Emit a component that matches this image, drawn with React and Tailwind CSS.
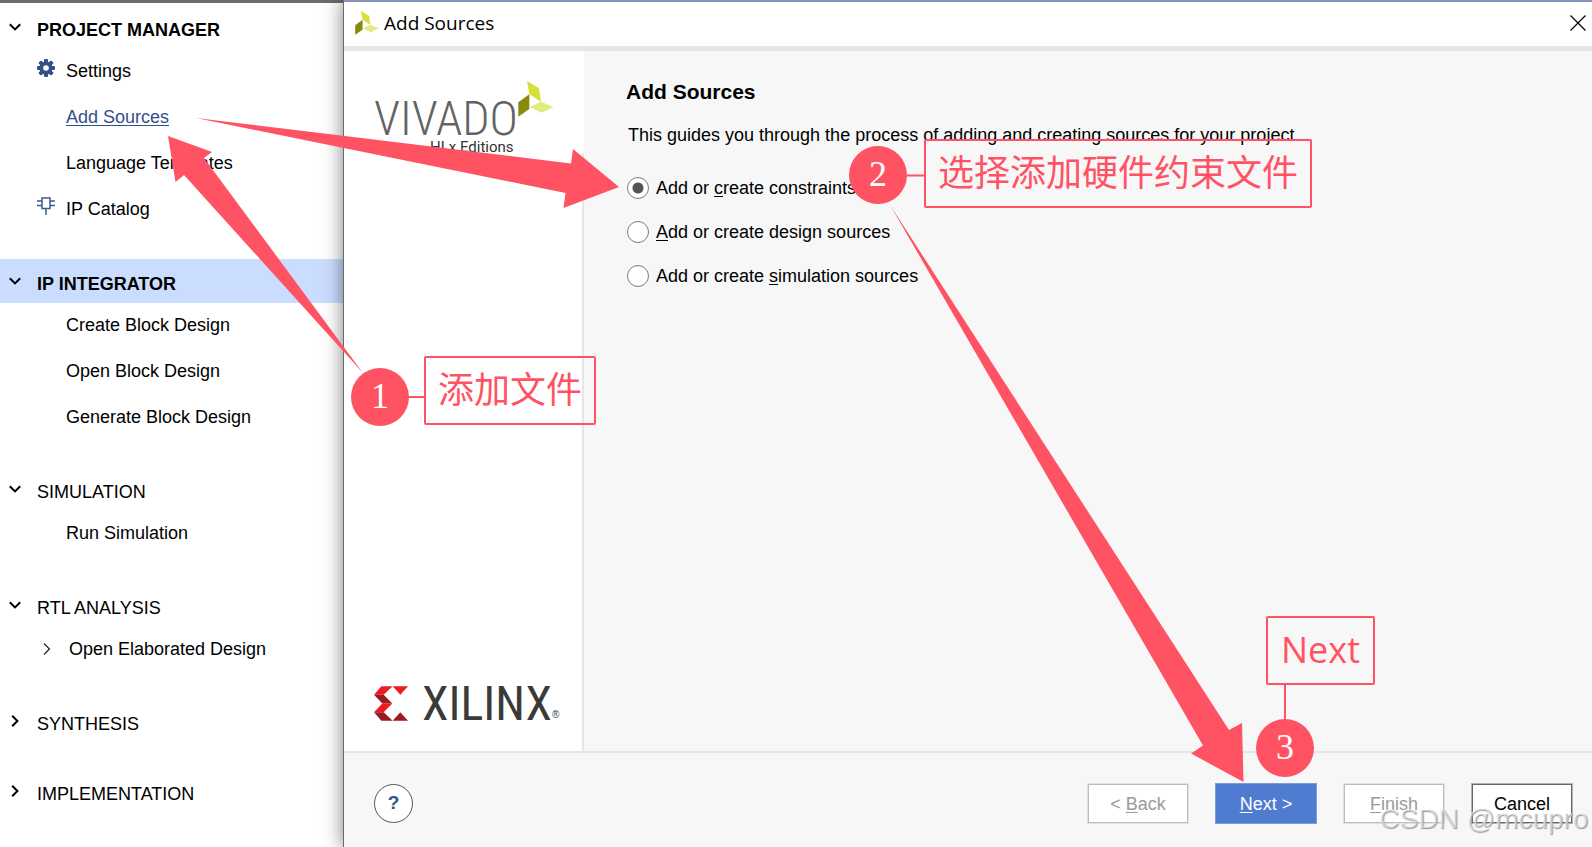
import React, { useState } from "react";
import clsx from "clsx";

const sections = [
  {
    title: "PROJECT MANAGER",
    open: true,
    bold: true,
    items: [
      { label: "Settings", icon: "gear" },
      { label: "Add Sources", active: true },
      { label: "Language Templates" },
      { label: "IP Catalog", icon: "chip" },
    ],
  },
  {
    title: "IP INTEGRATOR",
    open: true,
    bold: true,
    selected: true,
    items: [
      { label: "Create Block Design" },
      { label: "Open Block Design" },
      { label: "Generate Block Design" },
    ],
  },
  { title: "SIMULATION", open: true, items: [{ label: "Run Simulation" }] },
  {
    title: "RTL ANALYSIS",
    open: true,
    items: [{ label: "Open Elaborated Design", icon: "expand" }],
  },
  { title: "SYNTHESIS", open: false, items: [] },
  { title: "IMPLEMENTATION", open: false, items: [] },
];

// before / key / after, where key is the underlined shortcut letter
const options = [
  { id: "constraints", text: ["Add or ", "c", "reate constraints"] },
  { id: "design", text: ["", "A", "dd or create design sources"] },
  { id: "simulation", text: ["Add or create ", "s", "imulation sources"] },
];

function Mnemonic({ text }) {
  return (
    <span>
      {text[0]}
      <span className="underline underline-offset-2">{text[1]}</span>
      {text[2]}
    </span>
  );
}

function Chevron({ open }) {
  return (
    <svg width="12" height="12" viewBox="0 0 12 12" fill="none" stroke="#000" strokeWidth="2">
      {open ? <path d="M0.8 3.2 L6 8.4 L11.2 3.2" /> : <path d="M3.2 0.8 L8.4 6 L3.2 11.2" />}
    </svg>
  );
}

function ItemIcon({ name }) {
  if (name === "gear") {
    return (
      <svg className="mb-1.5" width="18" height="18" viewBox="0 0 18 18">
        <g fill="#33508a">
          <rect x="7" y="0" width="4" height="18" rx="1" />
          <rect x="0" y="7" width="18" height="4" rx="1" />
          <rect x="7" y="0" width="4" height="18" rx="1" transform="rotate(45 9 9)" />
          <rect x="7" y="0" width="4" height="18" rx="1" transform="rotate(-45 9 9)" />
          <circle cx="9" cy="9" r="6.6" />
        </g>
        <circle cx="9" cy="9" r="2.8" fill="#fff" />
      </svg>
    );
  }
  if (name === "chip") {
    return (
      <svg className="mb-1.5" width="18" height="18" viewBox="0 0 18 18" fill="none" stroke="#3c5a92" strokeWidth="1.5">
        <rect x="5" y="1" width="8" height="10.5" />
        <path d="M0 4H5M0 8.5H5M13 4H18M13 8.5H18M9 11.5V18" />
      </svg>
    );
  }
  if (name === "expand") {
    return (
      <svg className="ml-1.5" width="8" height="12" viewBox="0 0 8 12" fill="none" stroke="#222" strokeWidth="1.2">
        <path d="M1 0.5 L6.5 6 L1 11.5" />
      </svg>
    );
  }
  return null;
}

function Sidebar() {
  return (
    <nav className="w-[343px] shrink-0 border-t-3 border-[#6b6b6b] bg-white pt-0.5">
      <ul className="flex flex-col gap-[26px]">
        {sections.map((section) => (
          <li key={section.title}>
            <button
              type="button"
              className={clsx("flex h-11 w-full items-center pl-[9px]", section.selected && "bg-[#cbddff]")}
            >
              <span className="w-7 text-left">
                <Chevron open={section.open} />
              </span>
              <span className={clsx("pt-1.5", section.bold && "font-bold")}>{section.title}</span>
            </button>
            <ul>
              {section.items.map((item) => (
                <li key={item.label} className="flex h-[46px] items-center pb-0.5 pl-[37px]">
                  <span className={clsx("shrink-0", item.icon === "expand" ? "w-8" : "w-[29px]")}>
                    <ItemIcon name={item.icon} />
                  </span>
                  <a
                    href="#"
                    className={clsx(item.active && "text-[#33508a] underline underline-offset-2")}
                  >
                    {item.label}
                  </a>
                </li>
              ))}
            </ul>
          </li>
        ))}
      </ul>
    </nav>
  );
}

function VivadoMark({ className }) {
  return (
    <svg className={className} viewBox="518 81 36 36">
      <polygon points="527,81 539,88.3 541,101.7 529.3,94.3" fill="#d6e03a" />
      <polygon points="529.3,94.3 529.3,109 518.3,116.7 518.3,102.3" fill="#878a0c" />
      <polygon points="529.5,107 541,101.7 553.7,107 541.7,112.7" fill="#e3ea80" />
    </svg>
  );
}

function XilinxMark() {
  return (
    <svg className="shrink-0" width="34" height="35" viewBox="102 79 102 104">
      <g fill="#ed1c24">
        <polygon points="124,79 158,79 131,105 102,105" />
        <polygon points="127,131 157,131 131,157 102,157" />
        <polygon points="158,79 204,79 181,105" />
      </g>
      <g fill="#9b1b22">
        <polygon points="102,105 131,105 157,131 127,131" />
        <polygon points="102,157 131,157 158,183 124,183" />
        <polygon points="181,157 204,183 158,183" />
      </g>
    </svg>
  );
}

function BrandPanel() {
  return (
    <aside className="flex w-60 shrink-0 flex-col">
      <div className="h-[102px] bg-white pt-[30px] pl-[30px] text-[#636363]">
        <div className="flex h-9">
          <span className="w-36 pt-3.5 font-['Roboto_Condensed'] text-[48px] leading-[48px] font-light">VIVADO</span>
          <VivadoMark className="size-9" />
        </div>
        <p className="mt-[22px] pl-14 font-['Roboto'] text-[15px] leading-4 text-[#333]">HLx Editions</p>
      </div>
      <div className="flex flex-1 items-end border-r-2 border-[#e6e6e6] bg-white pb-[30px] pl-[30px]">
        <XilinxMark />
        <span className="ml-3.5 font-['Roboto_Condensed'] text-[48px] leading-[35px] text-[#3a3a38]">XILINX</span>
        <span className="text-[10px] leading-3 text-[#3a3a38]">®</span>
      </div>
    </aside>
  );
}

function FooterButton({ className, children }) {
  return (
    <button type="button" className={clsx("h-[39px] w-[100px] border pt-0.5 ring-1", className)}>
      {children}
    </button>
  );
}

function Dialog() {
  const [source, setSource] = useState("constraints");

  return (
    <section className="relative flex min-w-0 flex-1 flex-col border-l border-[#6b6b6b] bg-[#f7f7f7] shadow-[0_0_18px_rgba(0,0,0,0.5)]">
      <header className="flex h-[51px] items-center border-t-2 border-b-5 border-t-[#8394b8] border-b-[#e6e6e6] bg-white pr-1.5 pb-0.5 pl-[11px]">
        <VivadoMark className="size-6" />
        <h1 className="ml-[5px] flex-1 font-['Open_Sans'] text-[19px]">Add Sources</h1>
        <button type="button" aria-label="Close">
          <svg width="16" height="16" viewBox="0 0 16 16" stroke="#000" strokeWidth="1.2">
            <path d="M0.5 0.5 L15.5 15.5 M15.5 0.5 L0.5 15.5" />
          </svg>
        </button>
      </header>

      <div className="flex flex-1">
        <BrandPanel />
        <main className="min-w-0 flex-1 pt-[29px] pl-[42px]">
          <h2 className="text-[21px] leading-6 font-bold">Add Sources</h2>
          <p className="mt-[19px] pl-0.5 leading-6">
            This guides you through the process of adding and creating sources for your project
          </p>
          <fieldset className="mt-[19px]">
            {options.map((option) => (
              <label key={option.id} className="flex h-11 items-center gap-[7px]">
                <input
                  type="radio"
                  name="source"
                  checked={source === option.id}
                  onChange={() => setSource(option.id)}
                  className="mb-px ml-px size-[22px] appearance-none rounded-full border border-[#7d7d7d] bg-white checked:bg-[radial-gradient(circle,#555_5px,#fff_6px)]"
                />
                <Mnemonic text={option.text} />
              </label>
            ))}
          </fieldset>
        </main>
      </div>

      <footer className="flex h-24 items-center border-t-2 border-[#e6e6e6] pt-1.5 pr-5 pl-[30px]">
        <button
          type="button"
          className="size-[39px] rounded-full border border-[#555] bg-white text-[19px] font-bold text-[#33508a]"
        >
          ?
        </button>
        <div className="ml-auto flex gap-7">
          <FooterButton className="border-[#bcbcbc] bg-white text-[#9a9a9a] ring-[#e2e2e2]">
            <Mnemonic text={["< ", "B", "ack"]} />
          </FooterButton>
          <FooterButton className="border-[#4f7bd0] bg-[#4f7bd0] text-white ring-[#7c9cdb]">
            <Mnemonic text={["", "N", "ext >"]} />
          </FooterButton>
          <FooterButton className="border-[#bcbcbc] bg-white text-[#9a9a9a] ring-[#e2e2e2]">
            <Mnemonic text={["", "F", "inish"]} />
          </FooterButton>
          <FooterButton className="border-[#666] bg-white text-black ring-[#b5b5b5]">Cancel</FooterButton>
        </div>
      </footer>
    </section>
  );
}

function Step({ className, children }) {
  return (
    <span
      className={clsx(
        "absolute flex size-[58px] items-center justify-center rounded-full bg-[#ff5364] pb-0.5 font-['Liberation_Serif'] text-[36px] text-white",
        className
      )}
    >
      {children}
    </span>
  );
}

function Note({ className, children }) {
  return (
    <span
      className={clsx(
        "absolute flex h-[69px] items-center justify-center rounded-xs border-2 border-[#ff5364] pb-0.5 font-['Open_Sans','Noto_Sans_CJK_SC',sans-serif] text-[36px] whitespace-nowrap text-[#ff5364]",
        className
      )}
    >
      {children}
    </span>
  );
}

function Annotations() {
  return (
    <div className="pointer-events-none absolute inset-0">
      <svg className="absolute top-0 left-0 overflow-visible" width="1" height="1">
        <g fill="#ff5364">
          <polygon points="168,136 212,152 204,158 363,373 184,175 175.5,182" />
          <polygon points="196,118 571,163.5 573,149 619,187 563.5,208 565.5,193" />
          <polygon points="890,205 1229,730 1242,723 1243.5,782 1191,753.5 1203,745.5" />
        </g>
        <path d="M408 397H425M906 175.5H925M1285 684V720" stroke="#ff5364" strokeWidth="2" />
      </svg>
      <Step className="top-[368px] left-[351px]">1</Step>
      <Note className="top-[356px] left-[424px] w-[172px]">添加文件</Note>
      <Step className="top-[146px] left-[849px]">2</Step>
      <Note className="top-[139px] left-[924px] w-[388px]">选择添加硬件约束文件</Note>
      <Step className="top-[719px] left-[1256px]">3</Step>
      <Note className="top-[616px] left-[1266px] w-[109px]">Next</Note>
    </div>
  );
}

export default function App() {
  return (
    <div className="relative flex min-h-screen w-full overflow-hidden bg-white font-['Liberation_Sans',Arial,sans-serif] text-[18px] leading-6 text-black">
      <Sidebar />
      <Dialog />
      <Annotations />
      <span className="absolute right-1 bottom-2.5 text-[28px] leading-9 text-white/50 [text-shadow:1px_1px_1px_#999]">
        CSDN @mcupro
      </span>
    </div>
  );
}
